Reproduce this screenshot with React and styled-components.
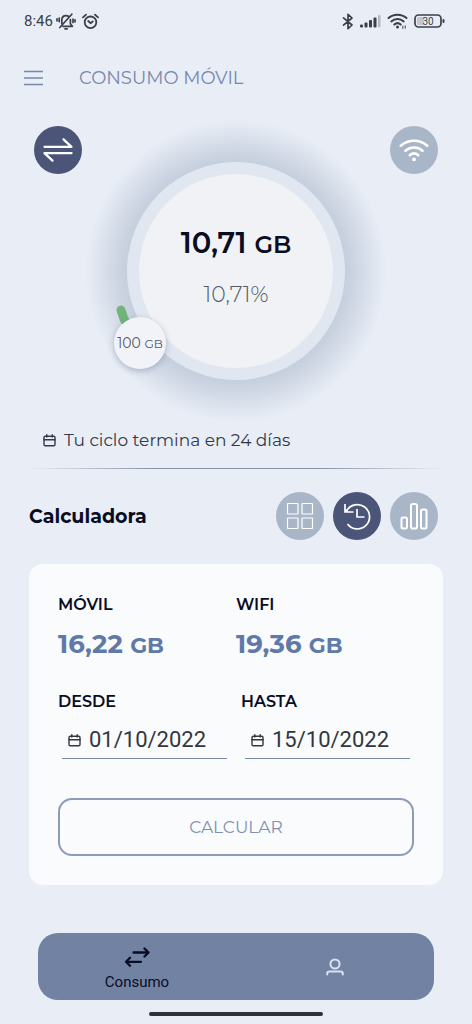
import React from "react";
import styled, { createGlobalStyle } from "styled-components";

const c = {
  page: "#e8edf6",
  ink: "#0a0c24",
  text: "#33384a",
  soft: "#555866",
  blue: "#6079a8",
  muted: "#7688ab",
  navy: "#4a5578",
  grey: "#a9b6c8",
  nav: "#7282a3",
};

const GlobalStyle = createGlobalStyle`
  *, *::before, *::after { box-sizing: border-box; }
  body {
    margin: 0;
    background: ${c.page};
    color: ${c.ink};
    font-family: Montserrat, Inter, "Liberation Sans", sans-serif;
  }
  button, input { font: inherit; color: inherit; margin: 0; padding: 0; border: 0; background: none; }
  button { cursor: pointer; }
  svg { display: block; flex: none; }
`;

const Page = styled.div`
  display: flex;
  flex-direction: column;
  min-height: 100vh;
`;

const StatusBar = styled.div`
  display: flex;
  align-items: center;
  justify-content: space-between;
  height: 42px;
  padding: 0 27px 0 24px;
  color: #3b3f48;
`;

const StatusGroup = styled.div`
  display: flex;
  align-items: center;
  gap: ${(p) => p.$gap}px;
`;

const Clock = styled.span`
  font: 400 15px/20px Roboto, sans-serif;
`;

const Header = styled.header`
  display: flex;
  align-items: center;
  gap: 36px;
  height: 72px;
  padding: 0 24px;
`;

const MenuButton = styled.button`
  color: ${c.muted};
`;

const Title = styled.h1`
  margin: 0;
  font-size: 18px;
  line-height: 24px;
  font-weight: 400;
  color: ${c.muted};
`;

const Usage = styled.section`
  display: flex;
  align-items: flex-start;
  justify-content: space-between;
  padding: 12px 34px 0;
`;

const RoundButton = styled.button`
  display: grid;
  place-items: center;
  width: 48px;
  height: 48px;
  flex: none;
  border-radius: 50%;
  color: #fff;
  background: ${(p) => (p.$active ? c.navy : c.grey)};
`;

const Dial = styled.div`
  position: relative;
  z-index: 0;
  display: flex;
  flex-direction: column;
  align-items: center;
  width: 218px;
  height: 218px;
  margin-top: 36px;
  padding-top: 52px;
  border: 12px solid #e1e7f0;
  border-radius: 50%;
  background: #f0f2f5;
  background-clip: padding-box;

  &::before {
    content: "";
    position: absolute;
    z-index: -2;
    inset: -54px;
    border-radius: 50%;
    background: radial-gradient(closest-side, #c3ccdc 68%, #c8d1df 75%, #d3dae7 83%, #dfe5ef 92%, ${c.page} 100%);
  }

  &::after {
    content: "";
    position: absolute;
    z-index: -1;
    inset: -12px;
    border-radius: 50%;
    background: #f0f2f5;
    border: 12px solid #e1e7f0;
  }
`;

const DialValue = styled.div`
  font-size: 29px;
  line-height: 34px;
  font-weight: 600;
  white-space: nowrap;
`;

const Unit = styled.span`
  font-size: 24px;
`;

const DialPercent = styled.div`
  margin-top: 20px;
  font-size: 22px;
  line-height: 26px;
  font-weight: 300;
  color: ${c.soft};
`;

const ProgressMark = styled.svg`
  position: absolute;
  left: -24px;
  top: 130px;
`;

const LimitBadge = styled.div`
  position: absolute;
  left: -25px;
  top: 143px;
  display: grid;
  place-items: center;
  width: 52px;
  height: 52px;
  border-radius: 50%;
  background: #f1f3f8;
  box-shadow: 0 2px 6px rgba(90, 105, 140, 0.4);
  font-size: 14px;
  line-height: 18px;
  font-weight: 400;
  color: ${c.soft};
  white-space: nowrap;
`;

const SmallUnit = styled.span`
  font-size: 12px;
`;

const Cycle = styled.p`
  display: flex;
  align-items: center;
  gap: 8px;
  margin: 48px 43px 0;
  font-size: 17px;
  line-height: 24px;
  color: ${c.text};
`;

const Divider = styled.hr`
  width: calc(100% - 58px);
  height: 1px;
  margin: 16px auto 0;
  border: 0;
  background: linear-gradient(90deg, transparent, #8793a9 30%, #8793a9 70%, transparent);
`;

const SectionHead = styled.div`
  display: flex;
  align-items: center;
  justify-content: space-between;
  padding: 23px 34px 0 29px;
`;

const SectionTitle = styled.h2`
  margin: 0;
  padding-top: 2px;
  font-size: 19px;
  line-height: 26px;
  font-weight: 700;
`;

const Tools = styled.div`
  display: flex;
  gap: 9px;
`;

const Card = styled.form`
  margin: 24px 29px 0;
  padding: 29px;
  border-radius: 14px;
  background: #f9fbfd;
`;

const Totals = styled.dl`
  display: grid;
  grid-template-columns: 1fr 1fr;
  margin: 0;
`;

const Label = styled.dt`
  font-size: 16px;
  line-height: 24px;
  font-weight: 600;
`;

const Total = styled.dd`
  margin: 9px 0 0;
  font-size: 26px;
  line-height: 36px;
  font-weight: 700;
  color: ${c.blue};
  white-space: nowrap;
`;

const TotalUnit = styled.span`
  font-size: 22px;
`;

const Dates = styled.div`
  display: grid;
  grid-template-columns: 1fr 1fr;
  gap: 10px;
  margin-top: 26px;
`;

const DateField = styled.label`
  display: block;
  font-size: 16px;
  line-height: 24px;
  font-weight: 600;
`;

const DateLine = styled.span`
  display: flex;
  align-items: center;
  gap: 8px;
  height: 45px;
  margin: 0 4px;
  padding: 8px 0 0 6px;
  border-bottom: 1px solid #7787a5;
  color: #34363d;
`;

const DateInput = styled.input`
  flex: 1;
  min-width: 0;
  width: 100%;
  font: 400 22px/28px Roboto, sans-serif;
  outline: 0;
`;

const CalculateButton = styled.button`
  width: 100%;
  height: 58px;
  margin-top: 39px;
  border: 2px solid #8d9cb6;
  border-radius: 14px;
  font-size: 17px;
  line-height: 24px;
  color: #8290ad;
`;

const TabBar = styled.nav`
  display: grid;
  grid-template-columns: 1fr 1fr;
  height: 67px;
  margin: auto 38px 12px;
  border-radius: 20px;
  background: ${c.nav};
`;

const Tab = styled.button`
  display: flex;
  flex-direction: column;
  align-items: center;
  justify-content: center;
  gap: 5px;
  padding-top: ${(p) => (p.$active ? 6 : 0)}px;
  font: 400 15px/20px Roboto, sans-serif;
  color: ${(p) => (p.$active ? c.ink : "#d9e2f2")};
`;

const HomeBar = styled.div`
  width: 174px;
  height: 4px;
  margin: 0 auto 8px;
  border-radius: 2px;
  background: #2d3036;
`;

const Line = ({ w, h, sw = 2, children, ...rest }) => (
  <svg width={w} height={h} viewBox={`0 0 ${w} ${h}`} fill="none" stroke="currentColor" strokeWidth={sw} strokeLinecap="round" strokeLinejoin="round" aria-hidden="true" {...rest}>
    {children}
  </svg>
);

const CalendarIcon = () => (
  <Line w={13} h={13} sw={1.4}>
    <rect x="1" y="2.2" width="11" height="9.6" rx="1.2" />
    <path d="M1 5.8h11M3.8 .8v2.2M9.2 .8v2.2" />
  </Line>
);

function StatusIcons() {
  return (
    <StatusGroup $gap={6}>
      <Line w={12} h={17} sw={1.7}>
        <path d="M1.500 4.800 10 12 6 15.700V1.300L10 5 1.500 12.200" />
      </Line>
      <svg width="21" height="14" viewBox="0 0 21 14" fill="currentColor" aria-hidden="true">
        <rect x="0" y="10.500" width="3" height="3" rx="1" />
        <rect x="4.500" y="8.500" width="3" height="5" rx="1" />
        <rect x="9" y="6" width="3" height="7.500" rx="1" />
        <rect x="13.500" y="3.500" width="3" height="10" rx="1" />
        <rect x="18" y="1" width="2.500" height="12.500" rx="1" opacity=".3" />
      </svg>
      <Line w={21} h={17} sw={2}>
        <path d="M1.500 5c5-4.500 13-4.500 18 0M4.300 8.400c3.400-3.100 9-3.100 12.400 0M7.300 11.600c1.900-1.700 4.500-1.700 6.400 0" />
        <circle cx="10.500" cy="14" r="1.500" fill="currentColor" stroke="none" />
        <path d="M15.800 13.200v2M18.300 13v2" strokeWidth="1.400" opacity=".7" />
      </Line>
      <svg width="31" height="14" viewBox="0 0 31 14" aria-hidden="true">
        <rect x="1" y="1" width="26" height="12" rx="3.500" fill="none" stroke="currentColor" strokeWidth="1.700" />
        <rect x="3" y="3" width="7" height="8" rx="1.500" fill="currentColor" opacity=".22" />
        <rect x="28.500" y="5" width="2" height="4" rx="1" fill="currentColor" />
        <text x="14" y="10.500" textAnchor="middle" fontFamily="Roboto, sans-serif" fontSize="10" fill="currentColor">30</text>
      </svg>
    </StatusGroup>
  );
}

export default function App() {
  return (
    <>
      <GlobalStyle />
      <Page>
        <StatusBar>
          <StatusGroup $gap={3}>
            <Clock>8:46</Clock>
            <StatusGroup $gap={6}>
              <Line w={20} h={17} sw={1.700}>
                <path d="M5.800 10.500V7c0-2.600 1.800-4.300 4.300-4.300 1 0 1.900.3 2.600.8M14.400 6.500V11l2 2.300H7M9 15.800h2.200M15.800 1.200 3.800 14.500M1 5.800v2M3.200 5v3.600M17 6v3.500M19 6.800v2" />
              </Line>
              <Line w={17} h={17} sw={1.800}>
                <circle cx="8.500" cy="9.300" r="5.800" />
                <path d="m6.200 8 2.300 2.200L10.800 8.500M1 4.300 4 1.600M16 4.300l-3-2.700" />
              </Line>
            </StatusGroup>
          </StatusGroup>
          <StatusIcons />
        </StatusBar>

        <Header>
          <MenuButton type="button" aria-label="Menú">
            <Line w={19} h={16} sw={1.500} strokeLinecap="butt">
              <path d="M0 1.500h19M0 8h19M0 14.500h19" />
            </Line>
          </MenuButton>
          <Title>CONSUMO MÓVIL</Title>
        </Header>

        <Usage>
          <RoundButton type="button" $active aria-label="Datos móviles">
            <Line w={30} h={26} sw={2.300}>
              <path d="M1.500 9.800h27L20.500 2.300M28.500 16.200h-27l8 7.500" />
            </Line>
          </RoundButton>
          <Dial>
            <DialValue>10,71 <Unit>GB</Unit></DialValue>
            <DialPercent>10,71%</DialPercent>
            <ProgressMark width="24" height="36" viewBox="0 0 24 36" aria-hidden="true">
              <path d="M6 6q2 8 7 17" fill="none" stroke="#73b37c" strokeWidth="9" strokeLinecap="round" />
            </ProgressMark>
            <LimitBadge><span>100 <SmallUnit>GB</SmallUnit></span></LimitBadge>
          </Dial>
          <RoundButton type="button" aria-label="WiFi">
            <Line w={30} h={24} sw={2.600}>
              <path d="M1.800 7.700c7.600-6.600 18.800-6.600 26.400 0M6.500 12.700c4.900-4.200 12.100-4.200 17 0M10.800 17.200c2.500-2.100 5.900-2.100 8.400 0" />
              <circle cx="15" cy="21.400" r="1.900" fill="currentColor" stroke="none" />
            </Line>
          </RoundButton>
        </Usage>

        <Cycle><CalendarIcon />Tu ciclo termina en 24 días</Cycle>
        <Divider />

        <SectionHead>
          <SectionTitle>Calculadora</SectionTitle>
          <Tools>
            <RoundButton type="button" aria-label="Aplicaciones">
              <Line w={28} h={28} sw={1.200}>
                <rect x="1.500" y="1.500" width="10.500" height="10.500" rx=".5" />
                <rect x="16" y="1.500" width="10.500" height="10.500" rx=".5" />
                <rect x="1.500" y="16" width="10.500" height="10.500" rx=".5" />
                <rect x="16" y="16" width="10.500" height="10.500" rx=".5" />
              </Line>
            </RoundButton>
            <RoundButton type="button" $active aria-label="Historial">
              <Line w={28} h={28} sw={1.700} strokeLinecap="butt" strokeLinejoin="miter">
                <path d="M4.500 22A12.200 12.200 0 1 0 3.600 9M2 2v8h8.500M2.300 9.700 7 5M14 7v8h7.500" />
              </Line>
            </RoundButton>
            <RoundButton type="button" aria-label="Gráfico">
              <Line w={28} h={28} sw={2}>
                <rect x="1.500" y="15.500" width="5.500" height="11" rx="1.500" />
                <rect x="11" y="2" width="6" height="24.500" rx="1.800" />
                <rect x="21" y="7.500" width="5.500" height="19" rx="1.500" />
              </Line>
            </RoundButton>
          </Tools>
        </SectionHead>

        <Card onSubmit={(e) => e.preventDefault()}>
          <Totals>
            <div>
              <Label>MÓVIL</Label>
              <Total>16,22 <TotalUnit>GB</TotalUnit></Total>
            </div>
            <div>
              <Label>WIFI</Label>
              <Total>19,36 <TotalUnit>GB</TotalUnit></Total>
            </div>
          </Totals>
          <Dates>
            <DateField>
              DESDE
              <DateLine><CalendarIcon /><DateInput type="text" defaultValue="01/10/2022" /></DateLine>
            </DateField>
            <DateField>
              HASTA
              <DateLine><CalendarIcon /><DateInput type="text" defaultValue="15/10/2022" /></DateLine>
            </DateField>
          </Dates>
          <CalculateButton type="submit">CALCULAR</CalculateButton>
        </Card>

        <TabBar>
          <Tab type="button" $active>
            <Line w={26} h={20} sw={2.300}>
              <path d="M9.500 5.500h15M20.500 1.500l4 4-4 4M17 14.800H2M6 10.800l-4 4 4 4" />
            </Line>
            Consumo
          </Tab>
          <Tab type="button" aria-label="Perfil">
            <Line w={18} h={18} sw={2}>
              <circle cx="9" cy="6" r="4.600" />
              <path d="M1.200 16.500v-.8c0-1.400.9-2.100 2.200-2.100h11.200c1.300 0 2.200.7 2.200 2.100v.8" />
            </Line>
          </Tab>
        </TabBar>
        <HomeBar />
      </Page>
    </>
  );
}
